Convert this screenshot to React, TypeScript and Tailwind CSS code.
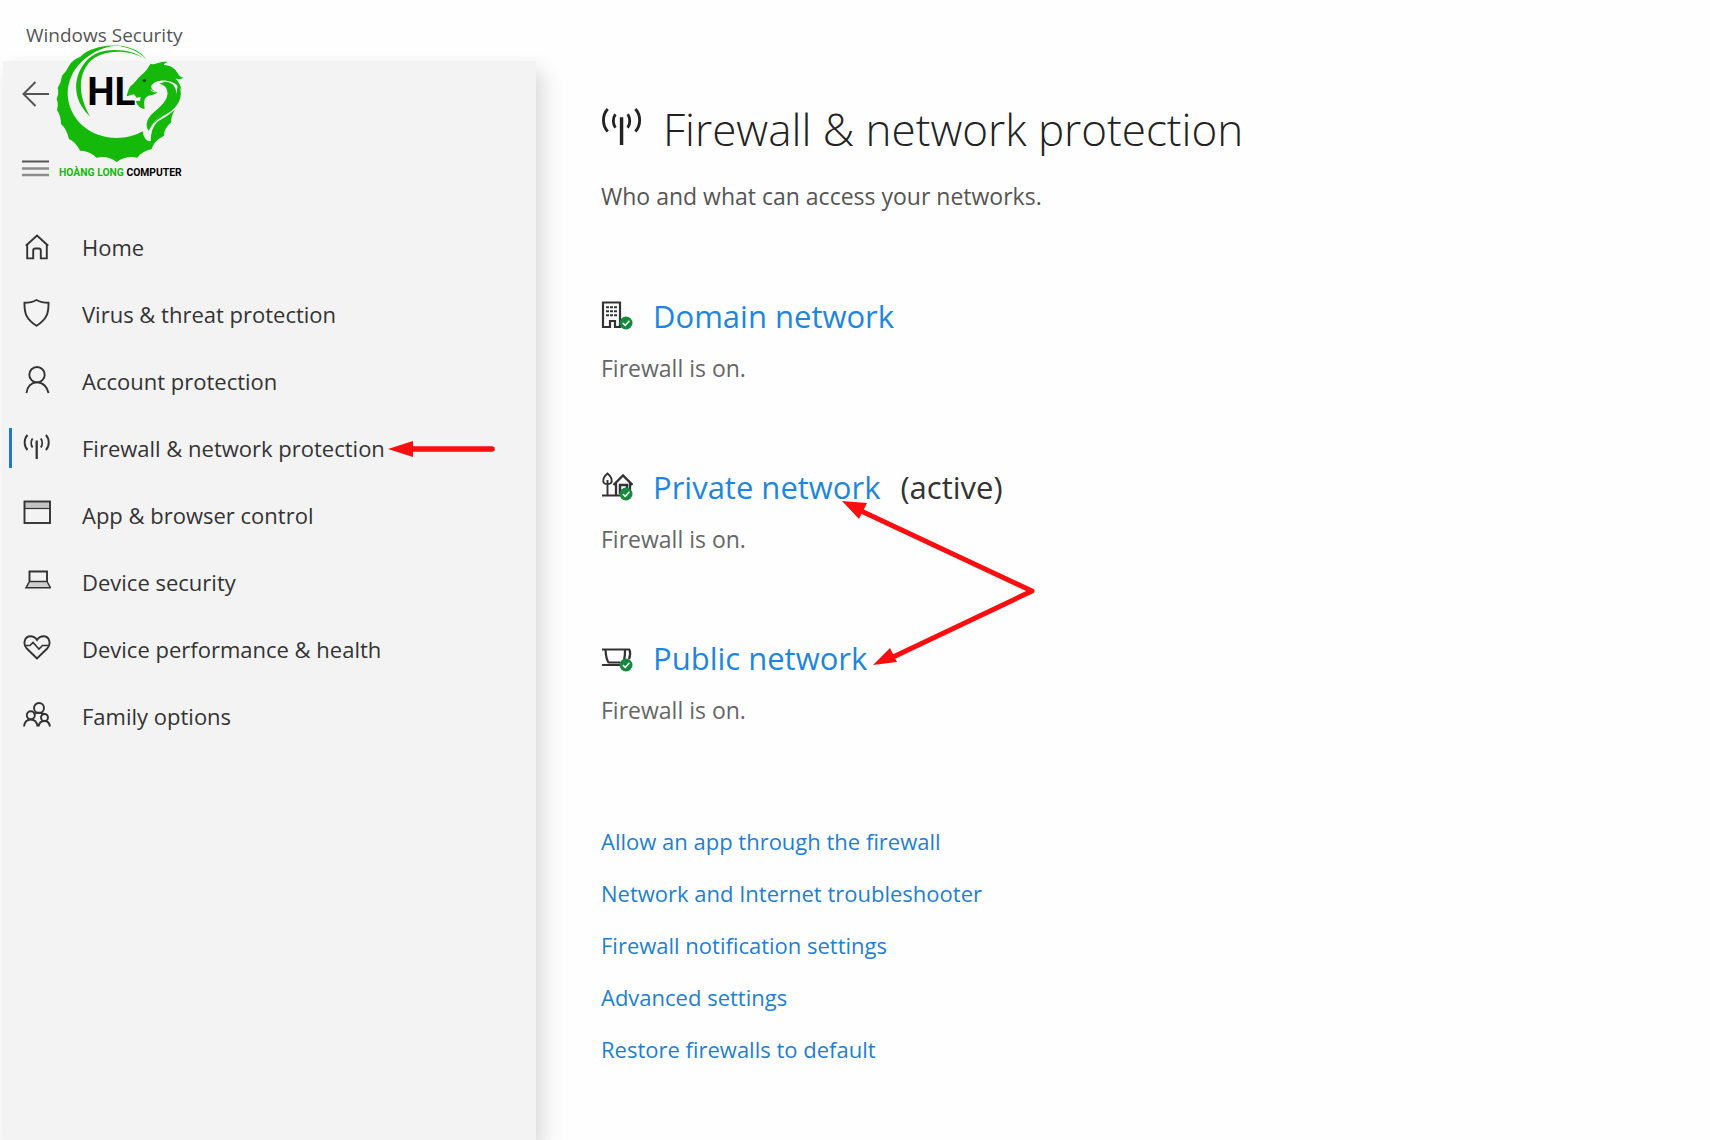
import React from 'react';

interface IconProps {
    className?: string;
}

interface NavItem {
    label: string;
    icon: React.FC<IconProps>;
    active?: boolean;
}

interface NetworkProfile {
    name: string;
    icon: React.FC<IconProps>;
    active?: boolean;
}

const stroke = {
    fill: 'none',
    stroke: 'currentColor',
    strokeWidth: 1.9,
} as const;

const HomeIcon: React.FC<IconProps> = ({ className }) => (
    <svg className={className} viewBox="0 -2 28 28" {...stroke}>
        <path d="M2.8 11.8L14 1.6l11.2 10.2M4.2 10.5V24.4h6V16.5a2 2 0 012-2h3.6a2 2 0 012 2v7.9h6V10.5" />
    </svg>
);

const ShieldIcon: React.FC<IconProps> = ({ className }) => (
    <svg className={className} viewBox="0 0 28 28" {...stroke}>
        <path d="M13.5 1C10 3 6 3.8 1.5 3.8C1.3 14 3 20 13.5 26.8C24 20 25.7 14 25.5 3.8C21 3.8 17 3 13.5 1z" />
    </svg>
);

const PersonIcon: React.FC<IconProps> = ({ className }) => (
    <svg className={className} viewBox="0 0 28 28" {...stroke}>
        <circle cx="14" cy="8.7" r="7.7" />
        <path d="M3.5 27C4 21 8 16.4 14 16.4S24.5 21 25.5 27" />
    </svg>
);

const AntennaIcon: React.FC<IconProps> = ({ className }) => (
    <svg className={className} viewBox="0 0 28 28" {...stroke}>
        <path d="M13.7 7.5V26" strokeWidth="2.3" />
        <path d="M9.6 5.5C7.8 8 7.8 12 9.6 14.5M17.8 5.5C19.6 8 19.6 12 17.8 14.5" />
        <path d="M4.5 2C.7 6 .7 13 4.5 17M22.9 2C26.7 6 26.7 13 22.9 17" />
    </svg>
);

const BrowserIcon: React.FC<IconProps> = ({ className }) => (
    <svg className={className} viewBox="0 0 28 28" {...stroke}>
        <path d="M1.5 2h25v7h-25z" fill="#c4c4c4" stroke="none" />
        <rect x="1.5" y="1.5" width="25.5" height="21.5" />
        <path d="M1.5 8.5h25.5" strokeWidth="1.2" />
    </svg>
);

const LaptopIcon: React.FC<IconProps> = ({ className }) => (
    <svg className={className} viewBox="0 0 28 28" {...stroke}>
        <path d="M6.5 14.5V4.5h17.5v10" />
        <path d="M6.5 14.5h17.5l3.5 6.3h-24.5z" fill="#d0d0d0" strokeWidth="1.5" />
    </svg>
);

const HeartIcon: React.FC<IconProps> = ({ className }) => (
    <svg className={className} viewBox="0 0 28 28" {...stroke}>
        <path d="M14 24.5L3.8 14.5C-.5 10 1.5 2.3 7.5 2.3C10.8 2.3 12.6 4 14 6C15.4 4 17.2 2.3 20.5 2.3C26.5 2.3 28.5 10 24.2 14.5z" />
        <path d="M3 11.5h4l3-3 6 6.5 3.5-3.5h5.5" strokeWidth="1.6" />
    </svg>
);

const FamilyIcon: React.FC<IconProps> = ({ className }) => (
    <svg className={className} viewBox="0 0 28 28" {...stroke}>
        <circle cx="16" cy="7" r="5" />
        <circle cx="7.8" cy="14.3" r="4" />
        <circle cx="21.5" cy="16.5" r="3.5" />
        <path d="M1 25.5c.5-4 3-7 6.8-7s6.2 3 6.8 7M10.5 13c1.5-1 3.5-1.3 5.5-1.3s4 .4 5.5 1.5M15.5 25.5c.5-3.2 2.8-5.5 6-5.5s5 2.3 5.5 5.5" />
    </svg>
);

const CheckBadge: React.FC = () => (
    <g stroke="none">
        <circle cx="25" cy="22" r="6.5" fill="#168a3c" />
        <path d="M21.8 22l2.4 2.4 4.2-4.6" fill="none" stroke="#fff" strokeWidth="1.5" />
    </g>
);

const BuildingIcon: React.FC<IconProps> = ({ className }) => (
    <svg className={className} viewBox="0 0 32 30" {...stroke}>
        <path d="M2 26V1.5h17V26h-5v-6h-5v6z" strokeWidth="2.2" />
        <path d="M5 6.3h11M5 10.3h11M5 14.3h11" strokeWidth="2" strokeDasharray="3 1" />
        <CheckBadge />
    </svg>
);

const HouseTreeIcon: React.FC<IconProps> = ({ className }) => (
    <svg className={className} viewBox="0 0 32 30" {...stroke}>
        <path d="M6.5 1.5C3.5 4 2 7 2.3 9.5C2.7 13 10.3 13 10.7 9.5C11 7 9.5 4 6.5 1.5zM6.5 8v15M1 23.5h19" />
        <path d="M12.5 13L22 3.5l9.5 9.5M15 11v12.5M29 11v8" strokeWidth="2.3" />
        <path d="M19 22v-9h7v5" strokeWidth="2.5" />
        <CheckBadge />
    </svg>
);

// park bench seen from the front
const BenchIcon: React.FC<IconProps> = ({ className }) => (
    <svg className={className} viewBox="0 0 32 30" {...stroke}>
        <path d="M1 6.5h28M4.5 7c.3 6 .8 9 3 12.5h12M24 7c.1 4-.2 7-1 10" strokeWidth="2.2" />
        <path d="M28.5 6.5c1 3 1 6-.5 9.500M1 22h19" strokeWidth="2.2" />
        <CheckBadge />
    </svg>
);

const BrandLogo: React.FC<IconProps> = ({ className }) => (
    <svg className={className} viewBox="165 130 390 414">
        <g fill="#14b90a">
            <path d="M440 180C405 140 335 125 280 148Q258 154 240 172Q218 180 207 198Q200 214 186 228Q184 248 173 265Q178 280 170 298Q176 312 171 332Q182 346 183 373Q200 388 207 418Q226 426 240 453Q266 452 290 474Q322 466 350 487Q378 467 412 474Q424 456 455 448Q460 425 492 408Q492 386 514 368Q512 350 525 330Q500 352 472 366Q452 385 452 425Q432 425 428 395C375 425 300 422 250 380C205 340 190 280 215 228C240 175 310 130 372 140C405 147 425 160 440 180z" />
            <path d="M435 178C390 143 300 140 262 180C220 225 212 295 270 350C236 290 232 230 268 188C300 152 380 144 435 178z" />
            <path d="M380 290C384 276 386 262 396 256C408 246 412 236 424 226C440 214 446 200 452 192C466 198 478 184 504 187C494 190 492 194 492 196C512 196 526 208 534 222C540 232 546 234 551 233C544 240 534 240 526 236C536 246 542 258 545 272C538 262 528 252 516 248C490 236 462 244 454 258C452 268 462 276 474 276C462 290 446 282 436 296C430 306 434 318 434 328C420 326 410 316 408 304L420 304L422 292L410 294L402 284z" />
            <path d="M478 252C512 236 534 262 528 290C518 326 474 340 446 394C432 372 444 352 466 334C490 314 510 292 500 268C496 258 488 254 478 252z" />
            <path d="M532 250C552 278 542 312 514 334C488 350 470 360 460 374C480 336 536 316 532 250z" />
        </g>
        <path d="M458 262c12 12 22-8 34 2M452 270c14 14 30 2 42-4" fill="none" stroke="#f4f4f4" strokeWidth="3" />
        <circle cx="433" cy="242" r="5" fill="#0b3d06" />
        <text x="262" y="315" fontSize="116" fill="#000" className="font-['Roboto',sans-serif] font-bold">
            HL
        </text>
        <text x="177" y="528" fontSize="31" fill="#000" className="font-['Roboto',sans-serif] font-bold">
            <tspan fill="#14b90a">HOÀNG LONG</tspan> COMPUTER
        </text>
    </svg>
);

const navItems: NavItem[] = [
    { label: 'Home', icon: HomeIcon },
    { label: 'Virus & threat protection', icon: ShieldIcon },
    { label: 'Account protection', icon: PersonIcon },
    { label: 'Firewall & network protection', icon: AntennaIcon, active: true },
    { label: 'App & browser control', icon: BrowserIcon },
    { label: 'Device security', icon: LaptopIcon },
    { label: 'Device performance & health', icon: HeartIcon },
    { label: 'Family options', icon: FamilyIcon },
];

const profiles: NetworkProfile[] = [
    { name: 'Domain network', icon: BuildingIcon },
    { name: 'Private network', icon: HouseTreeIcon, active: true },
    { name: 'Public network', icon: BenchIcon },
];

const links = [
    'Allow an app through the firewall',
    'Network and Internet troubleshooter',
    'Firewall notification settings',
    'Advanced settings',
    'Restore firewalls to default',
];

const Sidebar: React.FC = () => (
    <aside className="ml-[3px] w-[533px] shrink-0 bg-[#f3f3f3] shadow-[6px_10px_20px_rgba(0,0,0,0.16)]">
        <button aria-label="Back" className="flex h-[66px] items-center pl-[19px] text-[#555]">
            <svg className="h-7 w-7" viewBox="0 0 28 28" fill="none" stroke="currentColor" strokeWidth="2">
                <path d="M27 14H2M13.5 2L1.5 14l12 12" />
            </svg>
        </button>
        <button aria-label="Open navigation" className="mt-2 flex h-[66px] items-center pl-[19px]">
            <svg className="h-7 w-7" viewBox="0 0 28 28" fill="none" strokeWidth="2">
                <path d="M0 7.5h27" stroke="#555" />
                <path d="M0 14.5h27M0 21h27" stroke="#8c8c8c" strokeWidth="2.5" />
            </svg>
        </button>
        <nav className="mt-[13px]">
            <ul>
                {navItems.map(({ label, icon: Icon, active }) => (
                    <li key={label} className="relative">
                        <a href="#" className="flex h-[67px] items-center gap-[31px] pl-5 text-[22px] text-[#333]">
                            <Icon className="-mt-1 h-7 w-7 shrink-0" />
                            {label}
                        </a>
                        {active && (
                            <>
                                <span className="absolute left-[6px] top-[13px] h-10 w-[3px] bg-[#1f78c8]" />
                                <svg className="absolute left-[385px] top-[24px] h-5 w-[108px]" viewBox="0 0 108 20" fill="#fb0d10">
                                    <path d="M22 10H104" stroke="#fb0d10" strokeWidth="5.5" strokeLinecap="round" />
                                    <path d="M0 10L25 2v16z" />
                                </svg>
                            </>
                        )}
                    </li>
                ))}
            </ul>
        </nav>
    </aside>
);

const App: React.FC = () => {
    return (
        <div className="flex min-h-screen flex-col overflow-hidden bg-[#fefefe] font-['Open_Sans','Noto_Sans',sans-serif]">
            <header className="relative flex h-[61px] items-center pl-[26px] pt-[9px] text-[19px] text-[#555]">
                Windows Security
                <BrandLogo className="absolute left-[55px] top-[43px] z-10 h-[138px] w-[130px]" />
            </header>
            <div className="flex flex-1">
                <Sidebar />
                <main className="min-w-0 flex-1 pl-[65px]">
                    <h1 className="mt-8 flex h-[72px] items-center gap-5 text-[44px] font-[350] text-[#222]">
                        <AntennaIcon className="-mt-1 h-[42px] w-[42px]" />
                        Firewall &amp; network protection
                    </h1>
                    <p className="mt-[15px] text-[23px] leading-8 text-[#555]">Who and what can access your networks.</p>

                    <div className="relative mt-[84px] flex flex-col gap-[69px]">
                        {profiles.map(({ name, icon: Icon, active }) => (
                            <section key={name}>
                                <h2 className="flex h-10 items-center text-[31px] text-[#333]">
                                    <Icon className="mr-5 h-[30px] w-8 text-[#333]" />
                                    <a href="#" className="text-[#1e86dc]">{name}</a>
                                    {active && <span className="ml-5">(active)</span>}
                                </h2>
                                <p className="mt-4 h-[46px] text-[23px] leading-8 text-[#666]">Firewall is on.</p>
                            </section>
                        ))}
                        <svg className="absolute left-[240px] top-[204px] h-[168px] w-[196px]" viewBox="0 0 196 168" fill="#fb0d10">
                            <path d="M18 10L191 91L50 158" fill="none" stroke="#fb0d10" strokeWidth="5" strokeLinejoin="round" />
                            <path d="M1 1L26 3L18 19zM32 165L49 148L56 162z" />
                        </svg>
                    </div>

                    <ul className="mt-[75px] text-[22px] text-[#1f7fd0]">
                        {links.map((link) => (
                            <li key={link} className="flex h-[52px] items-center">
                                <a href="#">{link}</a>
                            </li>
                        ))}
                    </ul>
                </main>
            </div>
        </div>
    );
};

export default App;
